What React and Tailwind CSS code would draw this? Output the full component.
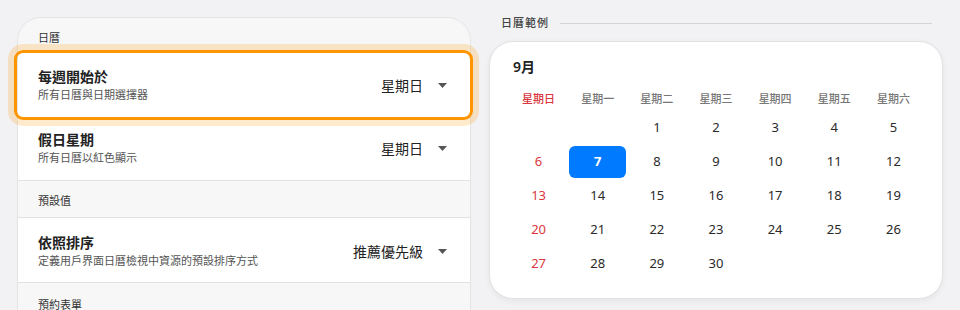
// Calendar settings screen
const FONT = { fontFamily: '"Noto Sans", "Noto Sans CJK TC", sans-serif' };

const Caret = () => (
  <svg className="w-[9px] h-[5px] text-[#555]" viewBox="0 0 9 5" fill="currentColor">
    <path d="M0 0h9L4.5 5z" />
  </svg>
);

const SectionHeader = ({ label, className = '' }) => (
  <div className={`bg-[#f7f7f7] px-5 text-[11px] leading-[14px] text-[#333] ${className}`}>{label}</div>
);

const SettingRow = ({ title, subtitle, value, className = '', highlighted }) => (
  <div className={`relative bg-white flex items-center justify-between pl-5 pr-[23px] ${className}`}>
    {highlighted && (
      <div className="absolute -left-[4px] -right-[3px] top-0 bottom-0 border-[3px] border-[#ff9500] rounded-[9px] shadow-[0_0_0_6px_rgba(255,149,0,0.2)] pointer-events-none"></div>
    )}
    <div>
      <div className="text-[14px] leading-[20px] font-bold text-[#222]">{title}</div>
      <div className="text-[11px] leading-[16px] text-[#555]">{subtitle}</div>
    </div>
    <div className="flex items-center gap-[15px]">
      <span className="text-[14px] text-[#222]">{value}</span>
      <Caret />
    </div>
  </div>
);

const weekdays = ['星期日', '星期一', '星期二', '星期三', '星期四', '星期五', '星期六'];
const days = [null, null, ...Array.from({ length: 30 }, (_, i) => i + 1)];

const App = () => {
  return (
    <div style={FONT} className="w-[960px] h-[310px] overflow-hidden bg-[#f2f2f4] flex gap-[18px] px-[17px] pt-[17px]">
      {/* Settings panel */}
      <div className="w-[454px] shrink-0 self-start bg-[#f7f7f7] border border-[#e4e4e4] rounded-t-[24px]">
        <SectionHeader label="日曆" className="rounded-t-[24px] pt-[13px] h-[32px]" />
        <SettingRow
          highlighted
          title="每週開始於"
          subtitle="所有日曆與日期選擇器"
          value="星期日"
          className="h-[70px] z-10"
        />
        <SettingRow
          title="假日星期"
          subtitle="所有日曆以紅色顯示"
          value="星期日"
          className="h-[61px] pb-[4px] border-b border-[#e2e2e2]"
        />
        <SectionHeader label="預設值" className="h-[37px] pt-[13px] border-b border-[#e2e2e2]" />
        <SettingRow
          title="依照排序"
          subtitle="定義用戶界面日曆檢視中資源的預設排序方式"
          value="推薦優先級"
          className="h-[65px] pt-[2px] border-b border-[#e2e2e2]"
        />
        <SectionHeader label="預約表單" className="h-[40px] pt-[15px]" />
      </div>

      {/* Calendar preview */}
      <div className="w-[454px] shrink-0 flex flex-col">
        <div className="flex items-center gap-[11px] pl-3 pr-[11px] h-[12px]">
          <span className="text-[11px] leading-[12px] font-medium text-[#444] tracking-[1px]">日曆範例</span>
          <div className="flex-1 h-px bg-[#d4d4d4]"></div>
        </div>
        <div className="mt-[12px] bg-white border border-[#e2e2e2] rounded-[24px] shadow-[0_2px_6px_rgba(0,0,0,0.06)] px-[19px] pt-[15px] pb-[18px]">
          <div className="pl-[4px] text-[14px] leading-[20px] font-semibold text-[#222]">9月</div>
          <div className="grid grid-cols-7 mt-[14px] text-[11px] leading-[16px] font-medium">
            {weekdays.map((w, i) => (
              <div key={w} className={`text-center ${i === 0 ? 'text-[#d9363e]' : 'text-[#777]'}`}>{w}</div>
            ))}
          </div>
          <div className="grid grid-cols-7 gap-y-[2px] mt-[5px] text-[13px]">
            {days.map((d, i) => {
              const sunday = i % 7 === 0;
              const selected = d === 7;
              return (
                <div
                  key={i}
                  className={`h-[32px] flex items-center justify-center ${
                    selected
                      ? 'bg-[#007aff] text-white font-bold rounded-[6px] mx-px'
                      : sunday
                      ? 'text-[#d9363e]'
                      : 'text-[#2a2a2a]'
                  }`}
                >
                  {d}
                </div>
              );
            })}
          </div>
        </div>
      </div>
    </div>
  );
};

export default App;
